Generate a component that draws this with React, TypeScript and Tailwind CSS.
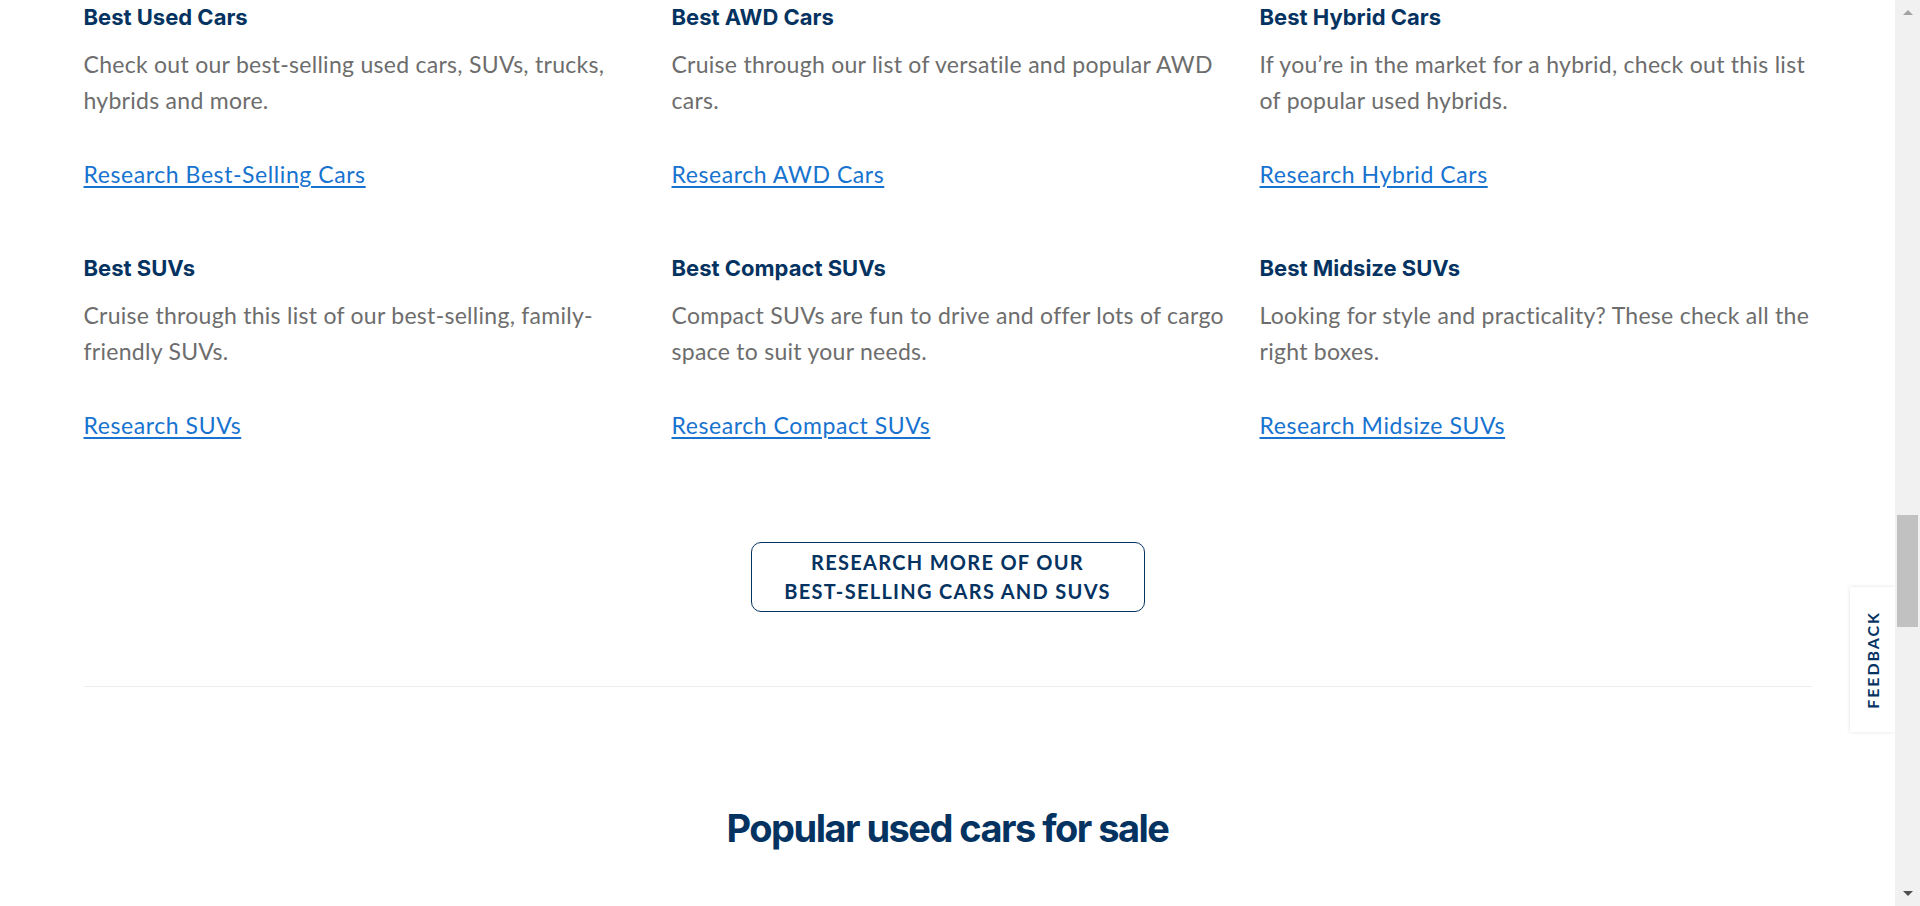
import React from "react";

type Item = {
  title: string;
  lines: string[];
  link: string;
};

const items: Item[] = [
  {
    title: "Best Used Cars",
    lines: ["Check out our best-selling used cars, SUVs, trucks,", "hybrids and more."],
    link: "Research Best-Selling Cars",
  },
  {
    title: "Best AWD Cars",
    lines: ["Cruise through our list of versatile and popular AWD", "cars."],
    link: "Research AWD Cars",
  },
  {
    title: "Best Hybrid Cars",
    lines: ["If you\u2019re in the market for a hybrid, check out this list", "of popular used hybrids."],
    link: "Research Hybrid Cars",
  },
  {
    title: "Best SUVs",
    lines: ["Cruise through this list of our best-selling, family-", "friendly SUVs."],
    link: "Research SUVs",
  },
  {
    title: "Best Compact SUVs",
    lines: ["Compact SUVs are fun to drive and offer lots of cargo", "space to suit your needs."],
    link: "Research Compact SUVs",
  },
  {
    title: "Best Midsize SUVs",
    lines: ["Looking for style and practicality? These check all the", "right boxes."],
    link: "Research Midsize SUVs",
  },
];

const headingFont = "font-['Inter','Open_Sans',sans-serif]";
const bodyFont = "font-['Lato','Liberation_Sans',sans-serif]";

function Card({ item }: { item: Item }) {
  return (
    <div className="flex flex-col">
      <h3 className={`${headingFont} text-[22px] leading-[30px] font-bold text-[#053361]`}>
        {item.title}
      </h3>
      <p className={`${bodyFont} mt-[14px] text-[23px] leading-[36px] tracking-[0.012em] text-[#6d6d6d] whitespace-nowrap`}>
        {item.lines[0]}
        <br />
        {item.lines[1]}
      </p>
      <a
        href="#"
        className={`${bodyFont} mt-[38px] self-start text-[23px] leading-[36px] tracking-[0.025em] text-[#1773cf] underline underline-offset-[3px]`}
      >
        {item.link}
      </a>
    </div>
  );
}

function Scrollbar() {
  return (
    <div className="flex w-[25px] shrink-0 flex-col items-center bg-[#f1f1f1]">
      <div className="flex h-[25px] w-full items-center justify-center">
        <span className="h-0 w-0 border-x-[5px] border-b-[5px] border-x-transparent border-b-[#a3a3a3]" />
      </div>
      <div className="mt-[490px] h-[112px] w-[21px] bg-[#c1c1c1]" />
      <div className="flex-1" />
      <div className="flex h-[25px] w-full items-center justify-center">
        <span className="h-0 w-0 border-x-[5px] border-t-[5px] border-x-transparent border-t-[#505050]" />
      </div>
    </div>
  );
}

export default function App() {
  return (
    <div className="flex h-screen w-full overflow-hidden bg-white">
      <div className="relative flex-1 overflow-hidden">
        <div className="mx-auto w-[1728px] pt-[2px]">
          <div className="grid grid-cols-3 gap-x-9 gap-y-[61px]">
            {items.map((item) => (
              <Card key={item.title} item={item} />
            ))}
          </div>

          <div className="mt-[99px] flex justify-center">
            <button
              className={`${bodyFont} flex h-[70px] w-[394px] flex-col items-center justify-center rounded-[10px] border border-[#053361] text-[20px] leading-[29px] font-bold tracking-[0.065em] text-[#053361]`}
            >
              <span>RESEARCH MORE OF OUR</span>
              <span>BEST-SELLING CARS AND SUVS</span>
            </button>
          </div>

          <div className="mt-[74px] h-px bg-[#ececec]" />

          <h2
            className={`${headingFont} mt-[117px] text-center text-[38px] leading-[48px] font-bold tracking-[-0.04em] text-[#053361]`}
          >
            Popular used cars for sale
          </h2>
        </div>

        <div className="absolute right-0 top-[587px] flex h-[145px] w-[45px] items-center justify-center bg-white shadow-[0_0_4px_rgba(0,0,0,0.12)]">
          <span
            className={`${bodyFont} -rotate-90 whitespace-nowrap text-[16px] font-bold tracking-[0.12em] text-[#053361]`}
          >
            FEEDBACK
          </span>
        </div>
      </div>
      <Scrollbar />
    </div>
  );
}
